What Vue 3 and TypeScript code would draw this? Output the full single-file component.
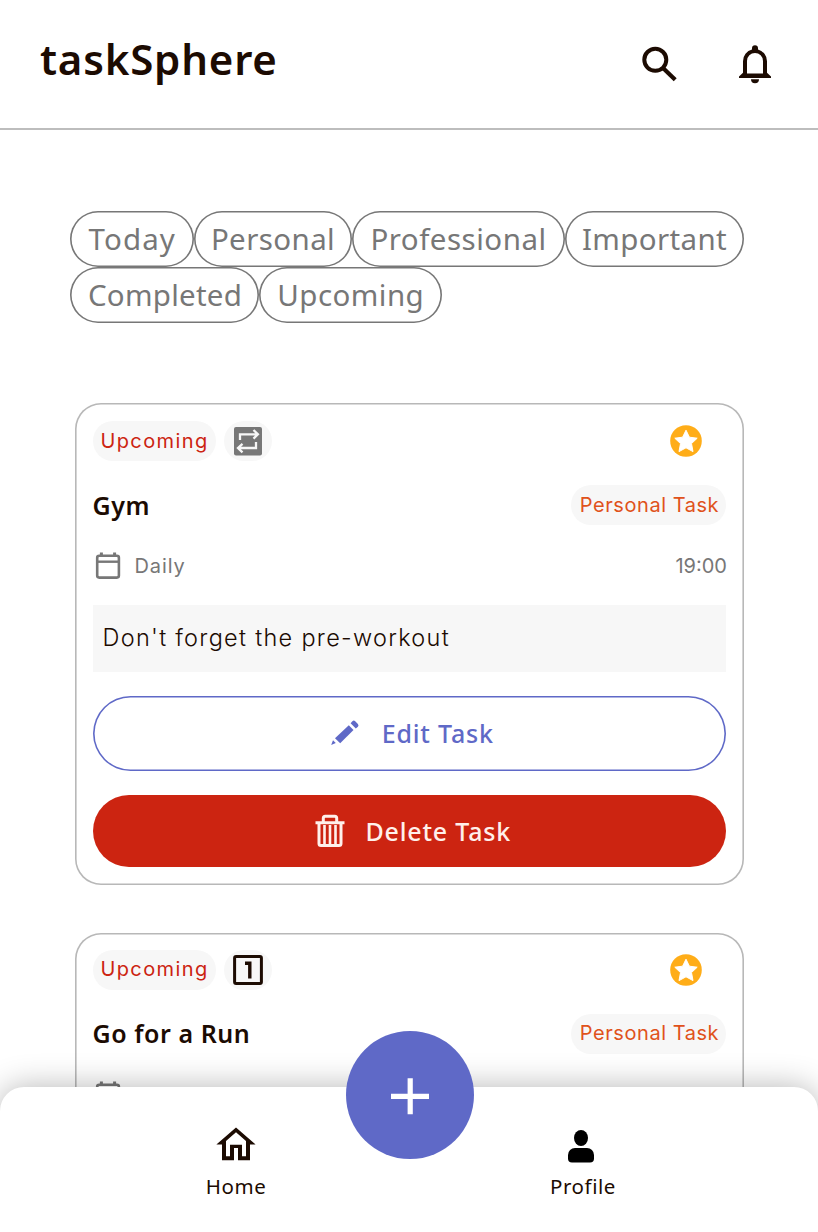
<script setup lang="ts">
interface Filter {
  label: string
  width: number
  spacing: number
}

interface Task {
  id: number
  title: string
  status: string
  repeats: boolean
  category: string
  schedule: string
  time: string
  note: string
}

const filters: Filter[] = [
  { label: 'Today', width: 123.5, spacing: 1.1 },
  { label: 'Personal', width: 158, spacing: 0.4 },
  { label: 'Professional', width: 213, spacing: 0.5 },
  { label: 'Important', width: 179, spacing: 0.35 },
  { label: 'Completed', width: 189, spacing: 0.25 },
  { label: 'Upcoming', width: 182.5, spacing: 0.45 },
]

const tasks: Task[] = [
  { id: 1, title: 'Gym', status: 'Upcoming', repeats: true, category: 'Personal Task', schedule: 'Daily', time: '19:00', note: "Don't forget the pre-workout" },
  { id: 2, title: 'Go for a Run', status: 'Upcoming', repeats: false, category: 'Personal Task', schedule: '', time: '', note: '' },
]
</script>

<template>
  <div class="app">
    <header class="header">
      <h1 class="brand">taskSphere</h1>
      <div class="actions">
        <svg class="search" width="40" height="40" viewBox="0 0 40 40">
          <circle cx="15.3" cy="15.8" r="11" fill="none" stroke="#1c0b02" stroke-width="4" />
          <path d="M23 24 35.2 35.8" fill="none" stroke="#1c0b02" stroke-width="4.2" />
        </svg>
        <svg width="40" height="40" viewBox="0 0 40 40">
          <path fill="#1c0b02" fill-rule="evenodd" d="M17 4.3a3 3 0 0 1 6 0v1.3A12 12 0 0 1 32 17.2v11.5l4 3.8v1.4H4v-1.4l4-3.8V17.2A12 12 0 0 1 17 5.6ZM12 29.6h16V17a8 8 0 0 0-16 0Z" />
          <path d="M16 35.3h8a4 4 0 0 1-8 0Z" fill="#1c0b02" />
        </svg>
      </div>
    </header>

    <nav class="filters">
      <button v-for="f in filters" :key="f.label" class="filter" :style="{ width: f.width + 'px', letterSpacing: f.spacing + 'px' }">{{ f.label }}</button>
    </nav>

    <main class="list">
      <article v-for="task in tasks" :key="task.id" class="card" :class="{ once: !task.repeats }">
        <div class="row top">
          <div class="tags">
            <span class="pill status">{{ task.status }}</span>
            <span class="pill kind">
              <svg v-if="task.repeats" class="repeat" width="30" height="30" viewBox="0 0 30 30">
                <rect x="1" y="1" width="28" height="28.6" rx="2" fill="#777" />
                <path d="M7 14V8.3h17M20.5 4l4.4 4.3-4.4 4.3M23 16v6H5.5M9.5 17.8 5 22l4.5 4.3" fill="none" stroke="#f7f7f7" stroke-width="2.3" />
              </svg>
              <svg v-else width="30" height="30" viewBox="0 0 30 30">
                <rect x="1.6" y="1.6" width="26.8" height="26.8" rx="1.5" fill="none" stroke="#1c0b02" stroke-width="3" />
                <path d="M12 8.3h4.8v15.2" fill="none" stroke="#1c0b02" stroke-width="3.4" />
              </svg>
            </span>
          </div>
          <svg class="star" width="32" height="32" viewBox="0 0 32 32">
            <circle cx="16" cy="16" r="15.8" fill="#ffad18" />
            <path d="m16 5.2 3.4 7 7.8 1-5.7 5.4 1.5 8-7-3.8-7 3.8 1.5-8-5.7-5.4 7.8-1Z" fill="#fff" stroke="#fff" stroke-linejoin="round" />
          </svg>
        </div>
        <div class="row heading">
          <h2 class="title">{{ task.title }}</h2>
          <span class="pill category">{{ task.category }}</span>
        </div>
        <div class="row schedule">
          <span class="when">
            <svg width="30" height="30" viewBox="0 0 30 30">
              <path d="M8.4 1.4v4M21.6 1.4v4" stroke="#777" stroke-width="3" />
              <rect x="4.2" y="4.8" width="21.7" height="21.8" rx="2" fill="none" stroke="#777" stroke-width="2.6" />
              <path d="M4 10.7h22" stroke="#777" stroke-width="2.4" />
            </svg>
            <span v-if="task.schedule">{{ task.schedule }}</span>
          </span>
          <time v-if="task.time" class="time">{{ task.time }}</time>
        </div>
        <template v-if="task.note">
          <p class="note">{{ task.note }}</p>
          <button class="btn edit">
            <svg width="30" height="30" viewBox="0 0 30 30">
              <path d="m5 20.2 13.8-13 4.7 4.7L10.2 25.3Z" fill="#5f69c7" />
              <path d="m20.6 5.3 1.8-2.1q1.4-1.2 2.8 0l2.7 2.7q1.2 1.4 0 2.8l-2.1 1.8ZM3 22.3l2.8 2.8-4.6 1.8Z" fill="#5f69c7" />
            </svg>
            <span>Edit Task</span>
          </button>
          <button class="btn delete">
            <svg width="30" height="34" viewBox="0 0 30 34" fill="none" stroke="#fff0eb" stroke-width="3">
              <path d="M8.3 8V4.2a2 2 0 0 1 2-2h9.4a2 2 0 0 1 2 2V8M.5 8.8h29M4 8.8v20.7a2 2 0 0 0 2 2h18a2 2 0 0 0 2-2V8.8" />
              <path d="M9.5 11v19M15 11v19M20.5 11v19" stroke-width="2.6" />
            </svg>
            <span>Delete Task</span>
          </button>
        </template>
      </article>
    </main>

    <footer class="tabbar">
      <a class="tab home">
        <svg width="40" height="36" viewBox="0 0 40 36">
          <path fill="#1c0b02" fill-rule="evenodd" d="M20 .4 39.6 17.6H34v15.6H22V21.1h-4v12.1H6V17.6H.4ZM20 5.3 10 14.1v15.2h4V17.8h12v11.5h4V14.1Z" />
        </svg>
        <span>Home</span>
      </a>
      <a class="tab profile">
        <svg width="28" height="36" viewBox="0 0 28 36">
          <ellipse cx="14" cy="9" rx="7" ry="8" />
          <path d="M8 19h12a7 7 0 0 1 7 7v3.5a4 4 0 0 1-4 4H5a4 4 0 0 1-4-4V26a7 7 0 0 1 7-7Z" />
        </svg>
        <span>Profile</span>
      </a>
      <button class="add" aria-label="Add task">
        <svg width="40" height="40" viewBox="0 0 40 40">
          <path d="M1 21.3h38M20.2 3.3v36" stroke="#fff" stroke-width="5.2" />
        </svg>
      </button>
    </footer>
  </div>
</template>

<style>
body {
  margin: 0;
  overflow: hidden;
}
</style>

<style scoped>
.app {
  position: relative;
  width: 818px;
  height: 1232px;
  overflow: hidden;
  background: #fff;
  color: #1c0b02;
  font-family: "Noto Sans", "Open Sans", sans-serif;
}
.app * {
  box-sizing: border-box;
  white-space: nowrap;
}
button {
  font-family: inherit;
  border: 0;
  background: none;
  padding: 0;
}
svg {
  display: block;
  flex: none;
}
.header {
  display: flex;
  justify-content: space-between;
  height: 130px;
  padding: 0 43px 0 40px;
  border-bottom: 2px solid #bdbdbd;
}
.brand {
  margin: 32px 0 0;
  font-size: 42px;
  line-height: 54px;
  font-weight: 600;
  letter-spacing: 0.8px;
}
.actions {
  display: flex;
  gap: 55px;
  padding-top: 44px;
}
.filters {
  display: flex;
  flex-wrap: wrap;
  margin: 81px 0 0 70px;
  width: 690px;
}
.filter {
  height: 56px;
  padding-left: 1px;
  border-radius: 28px;
  box-shadow: inset 0 0 0 1.6px #777;
  color: #777;
  font-size: 29.5px;
  line-height: 56px;
  text-align: center;
}
.list {
  display: flex;
  flex-direction: column;
  gap: 48px;
  margin: 80px 74.5px 0 75px;
}
.card {
  height: 481.5px;
  padding: 18px 17.5px 0 17.5px;
  border-radius: 26px;
  box-shadow: inset 0 0 0 1.6px #b8b8b8;
}
.card.once {
  padding-top: 17px;
}
.once .status,
.once .category {
  padding-bottom: 2px;
}
.row {
  display: flex;
  align-items: center;
  justify-content: space-between;
}
.tags {
  display: flex;
  gap: 8px;
}
.pill {
  display: flex;
  align-items: center;
  justify-content: center;
  height: 40px;
  border-radius: 20px;
  background: #f7f7f7;
  font-family: Inter, sans-serif;
  font-size: 20px;
}
.status {
  width: 123px;
  padding-left: 1px;
  color: #cc2411;
  letter-spacing: 1.4px;
}
.kind {
  width: 48px;
}
.repeat {
  margin-left: 1px;
}
.star {
  margin-right: 24.5px;
}
.heading {
  margin-top: 24px;
}
.title {
  margin: 0;
  font-size: 25px;
  line-height: 39px;
  font-weight: 600;
  letter-spacing: 0.55px;
}
.category {
  width: 155px;
  padding-left: 2px;
  color: #e0521b;
  letter-spacing: 0.55px;
}
.schedule {
  height: 42px;
  margin-top: 20px;
  color: #777;
  font: 20px Inter, sans-serif;
}
.when {
  display: flex;
  align-items: center;
  gap: 12px;
  letter-spacing: 0.9px;
}
.time {
  margin-right: -1px;
}
.note {
  height: 67px;
  margin: 18px 0 24px;
  padding-left: 10px;
  background: #f7f7f7;
  font: 300 23.5px/66px Inter, sans-serif;
  letter-spacing: 1.28px;
}
.btn {
  display: flex;
  align-items: center;
  justify-content: center;
  width: 100%;
  border-radius: 38px;
  font-size: 25px;
  font-weight: 500;
  letter-spacing: 0.8px;
}
.edit {
  height: 75px;
  padding: 0 0 2px 5px;
  gap: 22px;
  box-shadow: inset 0 0 0 1.6px #5f69c7;
  color: #5f69c7;
}
.delete {
  height: 72px;
  margin-top: 24px;
  padding: 0 0 1px 7px;
  gap: 21px;
  background: #cc2411;
  color: #fff0eb;
}
.tabbar {
  position: absolute;
  left: 0;
  right: 0;
  bottom: 0;
  height: 145.5px;
  border-radius: 24px 24px 0 0;
  background: #fff;
  box-shadow: 0 0 32px rgba(0, 0, 0, 0.29);
}
.tab {
  position: absolute;
  top: 40.5px;
  display: flex;
  flex-direction: column;
  align-items: center;
  gap: 9px;
  font-size: 20.5px;
  line-height: 28px;
  letter-spacing: 0.55px;
}
.home {
  left: 176px;
  width: 120px;
}
.profile {
  left: 523px;
  width: 120px;
}
.profile svg {
  margin-right: 4px;
  margin-top: 2px;
  margin-bottom: -2px;
}
.add {
  position: absolute;
  left: 345.5px;
  top: -56px;
  display: grid;
  place-items: center;
  width: 128px;
  height: 128px;
  border-radius: 50%;
  background: #5f69c7;
}
</style>
